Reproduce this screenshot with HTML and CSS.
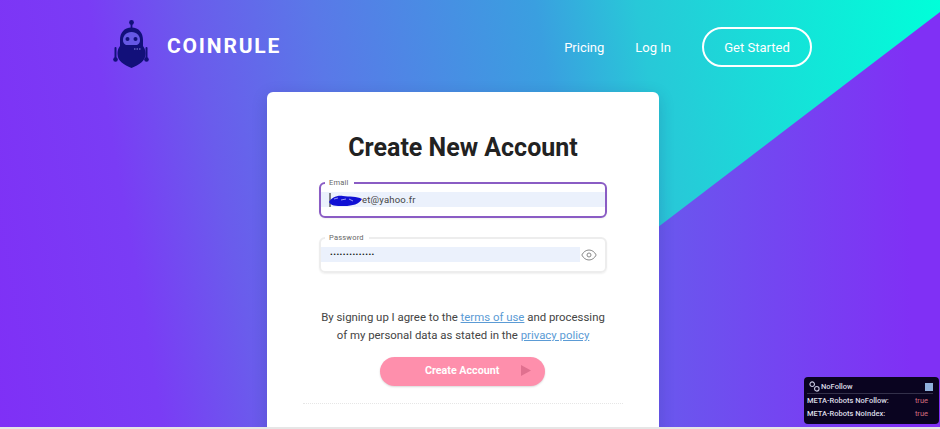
FILE: index.html
```html
<!DOCTYPE html>
<html lang="en">
<head>
    <meta charset="UTF-8">
    <meta name="viewport" content="width=device-width, initial-scale=1.0">
    <title>Coinrule - Create New Account</title>
    <link rel="stylesheet" href="styles.css">
</head>
<body>
    <div class="page">
        <div class="bg-corner"></div>

        <header class="header">
            <a class="logo" href="#">
                <svg class="logo-icon" viewBox="0 0 37 50" width="37" height="50">
                    <circle cx="18.5" cy="3.5" r="2.4" fill="#12107a"/>
                    <rect x="17.6" y="4" width="1.8" height="6" fill="#12107a"/>
                    <path d="M18.5 8.5C11 8.5 7 14 7 21V27C4.5 30 4.5 33 4.5 35C4.5 42 11 46 18.5 49C26 46 32.5 42 32.5 35C32.5 33 32.5 30 30 27V21C30 14 26 8.5 18.5 8.5Z" fill="#12107a"/>
                    <path d="M18.5 13C13 13 10 17 10 21C10 24.5 12 26 14 26H23C25 26 27 24.5 27 21C27 17 24 13 18.5 13Z" fill="#6558e4"/>
                    <circle cx="14.5" cy="20" r="2" fill="#12107a"/>
                    <circle cx="22.5" cy="20" r="2" fill="#12107a"/>
                    <path d="M21 30h1.5M23.5 30h1.5M26 30h1.5" stroke="#8a88e0" stroke-width="1"/>
                    <path d="M2.5 29V40M33.5 29V40" stroke="#12107a" stroke-width="2" stroke-linecap="round"/>
                    <circle cx="2.5" cy="40.5" r="2.3" fill="#12107a"/>
                    <circle cx="33.5" cy="40.5" r="2.3" fill="#12107a"/>
                </svg>
                <span class="logo-text">COINRULE</span>
            </a>
            <nav class="nav">
                <a href="#">Pricing</a>
                <a href="#">Log In</a>
                <a class="btn-outline" href="#">Get Started</a>
            </nav>
        </header>

        <main class="card">
            <h1>Create New Account</h1>

            <fieldset class="field field-active">
                <legend>Email</legend>
                <div class="field-value">
                    <svg class="scribble" viewBox="0 0 33 14" width="33" height="14">
                        <path d="M1 0V14" stroke="#111" stroke-width="1"/>
                        <path d="M0 9C2 5 8 2 14 3S28 3 33 6C30 11 24 13 15 13S2 13 0 9Z" fill="#1010d4"/>
                        <path d="M5 6L9 5M12 7L17 6M20 6L24 8" stroke="#9a9af0" stroke-width="1"/>
                    </svg><span>et@yahoo.fr</span>
                </div>
            </fieldset>

            <fieldset class="field">
                <legend>Password</legend>
                <div class="field-row">
                    <div class="field-value field-dots">&bull;&bull;&bull;&bull;&bull;&bull;&bull;&bull;&bull;&bull;&bull;&bull;&bull;&bull;</div>
                    <svg class="eye" viewBox="0 0 16 12" width="16" height="12">
                        <path d="M.8 6C2.5 2.8 5 1 8 1S13.5 2.8 15.2 6C13.5 9.2 11 11 8 11S2.5 9.2 .8 6Z" fill="none" stroke="#8a8a8a" stroke-width="1"/>
                        <circle cx="8" cy="6" r="2" fill="none" stroke="#8a8a8a" stroke-width="1"/>
                    </svg>
                </div>
            </fieldset>

            <p class="terms">By signing up I agree to the <a href="#">terms of use</a> and processing<br>of my personal data as stated in the <a href="#">privacy policy</a></p>

            <button class="btn-create" type="button">
                <span>Create Account</span>
                <svg viewBox="0 0 10 11" width="10" height="11"><path d="M0 0L10 5.5L0 11Z" fill="#e0708f"/></svg>
            </button>

            <div class="divider"></div>
        </main>

        <aside class="seo-box">
            <div class="seo-title">
                <svg viewBox="0 0 12 12" width="11" height="11">
                    <circle cx="3.5" cy="3.5" r="2.5" fill="none" stroke="#c8c8e0" stroke-width="1.2"/>
                    <circle cx="8.5" cy="8.5" r="2.5" fill="none" stroke="#c8c8e0" stroke-width="1.2"/>
                </svg>
                <span>NoFollow</span>
                <i class="seo-square"></i>
            </div>
            <div class="seo-row"><span>META-Robots NoFollow:</span><b>true</b></div>
            <div class="seo-row"><span>META-Robots NoIndex:</span><b>true</b></div>
        </aside>
    </div>
</body>
</html>
```

FILE: styles.css
```css
* {
    box-sizing: border-box;
    margin: 0;
    padding: 0;
}

html, body {
    height: 100%;
}

body {
    font-family: Roboto, 'Liberation Sans', sans-serif;
    color: #222;
    overflow: hidden;
}

a {
    color: inherit;
    text-decoration: none;
}

.page {
    position: relative;
    height: 429px;
    overflow: hidden;
    border-bottom: 2px solid #e6e6e6;
    background: linear-gradient(80deg, #7f30f6 0%, #7a3cf5 16%, #6a5cec 26%, #5a78e8 38%, #3a9fe0 60%, #28c8d8 70%, #00ffd9 100%);
}

/* Purple wedge lower right */
.bg-corner {
    position: absolute;
    inset: 0;
    background: linear-gradient(90deg, #5c6aec 60%, #6b55ee 72%, #8030f5 97%);
    clip-path: polygon(100% 12px, 100% 100%, 396px 100%);
}

/* Header */
.header {
    position: relative;
    display: flex;
    align-items: center;
    justify-content: space-between;
    height: 92px;
    padding: 0 128px 0 113px;
}

.logo {
    display: flex;
    align-items: center;
    gap: 17px;
    color: #fff;
}

.logo-icon {
    margin-bottom: 5px;
}

.logo-text {
    font-size: 21px;
    font-weight: 700;
    letter-spacing: 1.8px;
}

.nav {
    display: flex;
    align-items: center;
    gap: 31px;
    margin-top: 2px;
    color: #fff;
    font-size: 13px;
}

.btn-outline {
    display: flex;
    align-items: center;
    justify-content: center;
    width: 110px;
    height: 40px;
    border: 2px solid #fff;
    border-radius: 20px;
}

/* Card */
.card {
    position: relative;
    width: 392px;
    height: 400px;
    margin-left: 267px;
    padding-top: 39px;
    background: #fff;
    border-radius: 6px;
    box-shadow: 0 4px 16px rgba(30, 20, 90, 0.18);
    display: flex;
    flex-direction: column;
    align-items: center;
}

.card h1 {
    font-size: 25px;
    font-weight: 700;
    line-height: 34px;
    color: #222;
    margin-bottom: 13px;
}

/* Fields */
.field {
    width: 288px;
    height: 40px;
    border: 2px solid #ededed;
    border-radius: 6px;
    margin-bottom: 15px;
    box-shadow: 0 1px 2px rgba(0, 0, 0, 0.06);
}

.field legend {
    margin-left: 4px;
    padding: 0 5px 0 4px;
    font-size: 7.5px;
    line-height: 9px;
    letter-spacing: 0.2px;
    color: #666;
}

.field-active {
    border-color: #8a5cc4;
}

.field-value {
    display: flex;
    align-items: center;
    height: 15px;
    margin-top: 5px;
    background: #ebf1fc;
    font-size: 9.5px;
    letter-spacing: 0.2px;
    color: #444;
    padding-left: 8px;
}

.scribble {
    flex: none;
}

.field-row {
    display: flex;
    align-items: center;
    margin-top: 5px;
}

.field-row .field-value {
    flex: 1;
    margin-top: 0;
    color: #111;
    font-size: 8px;
    letter-spacing: 0.5px;
    padding-left: 9px;
}

.eye {
    margin-right: 8px;
    margin-left: 1px;
}

/* Terms */
.terms {
    margin-top: 20px;
    font-size: 11.4px;
    line-height: 18px;
    text-align: center;
    color: #444;
}

.terms a {
    color: #5b9bd5;
    text-decoration: underline;
}

.btn-create {
    display: flex;
    align-items: center;
    width: 165px;
    height: 29px;
    margin-top: 13px;
    margin-right: 1px;
    padding: 0 0 2px 45px;
    border: none;
    border-radius: 15px;
    background: #fe8fac;
    box-shadow: 0 1px 2px rgba(0, 0, 0, 0.15);
    color: #fff;
    font-family: inherit;
    font-size: 10.7px;
    font-weight: 700;
}

.btn-create svg {
    margin-left: 22px;
}

.divider {
    width: 320px;
    margin-top: 17px;
    border-top: 1px dotted #e6e6e6;
}

/* SEO extension box */
.seo-box {
    position: absolute;
    left: 804px;
    top: 377px;
    width: 135px;
    height: 47px;
    padding: 3px 11px 0 3px;
    border-radius: 4px;
    background: #0a0420;
    color: #dcdce6;
    font-size: 7.5px;
    font-weight: 500;
}

.seo-title {
    display: flex;
    align-items: center;
    gap: 1px;
    height: 14px;
    margin-right: -5px;
    padding-left: 2px;
    border-bottom: 1px solid #33304a;
}

.seo-square {
    width: 8px;
    height: 8px;
    margin-left: auto;
    background: #8fb0dc;
}

.seo-row {
    display: flex;
    justify-content: space-between;
    line-height: 13px;
}

.seo-row b {
    font-weight: 400;
    color: #d06a7c;
}
```
